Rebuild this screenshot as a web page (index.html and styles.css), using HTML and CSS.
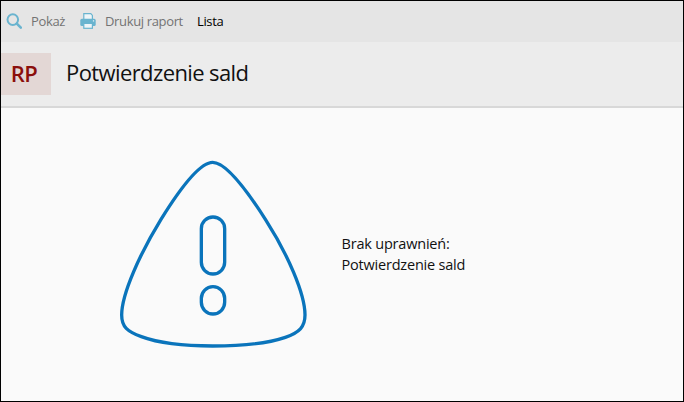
FILE: index.html
```
<!DOCTYPE html>
<html lang="pl">
<head>
    <meta charset="UTF-8">
    <meta name="viewport" content="width=device-width, initial-scale=1.0">
    <title>Potwierdzenie sald</title>
    <link rel="stylesheet" href="styles.css">
</head>
<body>
    <div class="window">
        <!-- Toolbar -->
        <nav class="toolbar">
            <a class="tool tool-show">
                <svg class="icon" viewBox="0 0 16 16" width="16" height="16">
                    <circle cx="6.8" cy="6.6" r="5.3" fill="none" stroke="#6ab4cf" stroke-width="2"/>
                    <path d="M10.8 10.6 L14.8 14.6" stroke="#6ab4cf" stroke-width="2.6" stroke-linecap="round"/>
                </svg>
                <span>Pokaż</span>
            </a>
            <a class="tool tool-print">
                <svg class="icon" viewBox="0 0 16 16" width="16" height="16">
                    <path d="M3.8 7 V0.7 H10.8 L12.4 2.4 V7 Z" fill="#eef5f8" stroke="#6ab4cf" stroke-width="1.2"/>
                    <rect x="0.3" y="5.8" width="15.4" height="7.2" rx="1.6" fill="#6ab4cf"/>
                    <rect x="3.8" y="10.4" width="8.6" height="4.9" fill="#eef5f8" stroke="#6ab4cf" stroke-width="1.2"/>
                    <rect x="12.9" y="7.3" width="1.2" height="1.2" fill="#eef5f8"/>
                </svg>
                <span>Drukuj raport</span>
            </a>
            <a class="tool tool-list">Lista</a>
        </nav>

        <header class="header">
            <div class="badge">RP</div>
            <h1 class="title">Potwierdzenie sald</h1>
        </header>

        <!-- No permission message -->
        <main class="content">
            <svg class="warning" viewBox="0 0 630 630" width="210" height="210" fill="none" stroke="#0a74bb" stroke-width="10">
                <path d="M308 37 C350 37 416 129 468 211 C532 311 585 431 585 495 C585 531 568 547 526 562 C464 583 390 588 308 588 C226 588 156 583 94 560 C52 544 35 531 35 495 C35 431 91 309 153 208 C205 124 268 37 308 37 Z"/>
                <rect x="274" y="201" width="70" height="171" rx="35"/>
                <rect x="274" y="410" width="70" height="82" rx="35"/>
            </svg>
            <p class="message">
                <span class="message-label">Brak uprawnień:</span><br>
                <span class="message-name">Potwierdzenie sald</span>
            </p>
        </main>
    </div>
</body>
</html>
```
FILE: styles.css
```
* {
    box-sizing: border-box;
}
body {
    margin: 0;
    font-family: "Open Sans", "Noto Sans", sans-serif;
    color: #111;
}
.window {
    display: flex;
    flex-direction: column;
    height: 402px;
    border: 1px solid #000;
    background: #fafafa;
}
.toolbar {
    display: flex;
    align-items: center;
    height: 41px;
    padding: 0 0 2px 5px;
    background: #e5e5e5;
    font-size: 13px;
    color: #737373;
}
.tool {
    display: flex;
    align-items: center;
    white-space: nowrap;
    letter-spacing: -0.35px;
}
.icon {
    margin-right: 9px;
}
.tool-show {
    width: 74px;
}
.tool-print {
    width: 117px;
}
.tool-list {
    color: #000;
}
.header {
    display: flex;
    align-items: center;
    height: 66px;
    padding-bottom: 1px;
    background: #ececec;
    border-bottom: 2px solid #d8d8d8;
}
.badge {
    width: 50px;
    height: 42px;
    padding-right: 4px;
    background: #e3d7d5;
    color: #8b0f0c;
    font-size: 22px;
    font-weight: 600;
    line-height: 40px;
    text-align: center;
    letter-spacing: -0.5px;
}
.title {
    margin: 0 0 3px 15px;
    font-size: 22px;
    font-weight: 400;
    letter-spacing: -0.6px;
}
.content {
    display: flex;
    flex: 1;
    padding: 42px 0 0 109px;
}
.message {
    margin: 83px 0 0 21.5px;
    font-size: 14.5px;
    line-height: 21px;
    letter-spacing: -0.2px;
}
```
